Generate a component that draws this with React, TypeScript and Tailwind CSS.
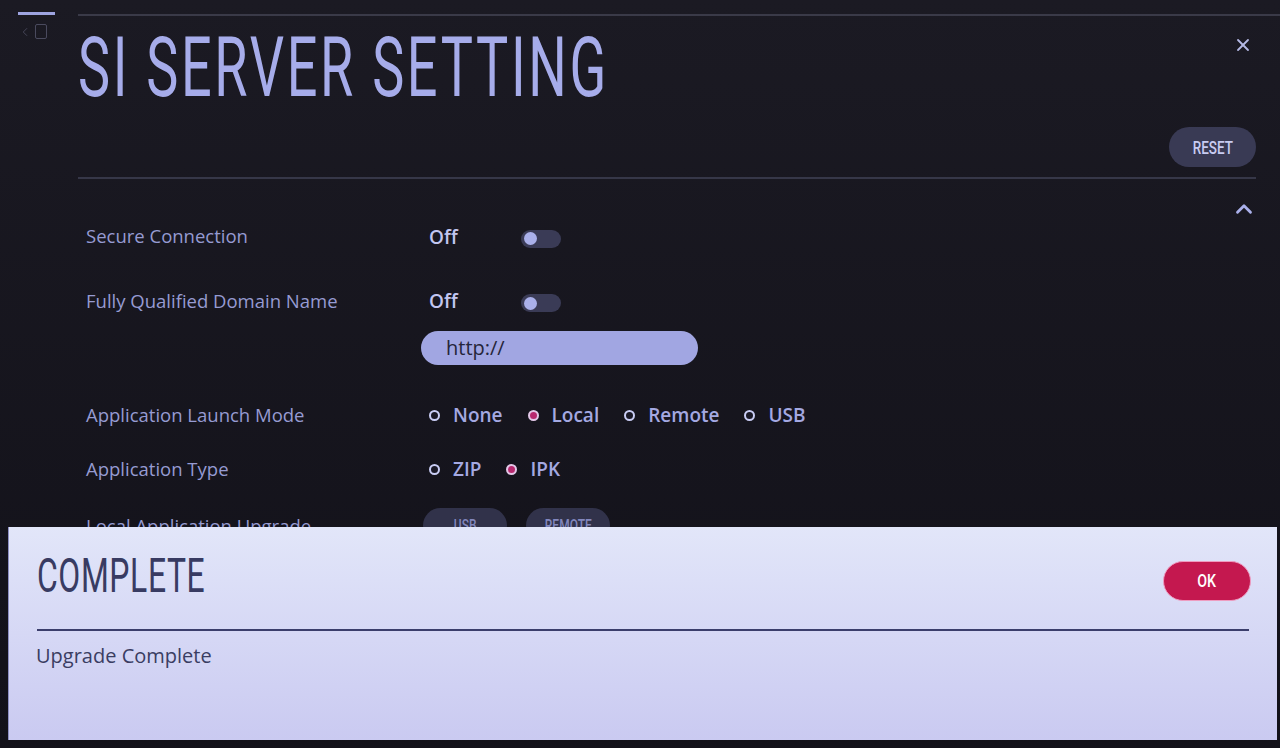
import { X, ChevronUp, ChevronLeft } from "lucide-react";

const label = "text-[18.5px] text-[#969bd2]";
const sans = { fontFamily: "'Open Sans', 'DejaVu Sans', sans-serif" };
const cond = { fontFamily: "Roboto, 'DejaVu Sans', sans-serif" };

function Toggle() {
  return (
    <div className="flex h-[18px] w-[40px] items-center rounded-full bg-[#3a3b56] px-[3px]">
      <div className="h-[13px] w-[13px] rounded-full bg-[#aab0ea]" />
    </div>
  );
}

function Radio({ text, on }: { text: string; on?: boolean }) {
  return (
    <div className="flex items-center gap-[13px]">
      <div
        className={
          on
            ? "h-[11px] w-[11px] rounded-full border-2 border-[#e3c8e8] bg-[#b8296f]"
            : "h-[11px] w-[11px] rounded-full border-2 border-[#c9cdf4] bg-[#1a1926]"
        }
      />
      <span className="text-[19px] font-semibold text-[#a4a9e2]" style={sans}>
        {text}
      </span>
    </div>
  );
}

function Pill({ text }: { text: string }) {
  return (
    <div className="flex h-[35px] w-[84px] items-center justify-center rounded-full bg-[#31324a]">
      <span className="inline-block scale-x-[0.75] text-[16px] font-medium text-[#8287bd]" style={cond}>
        {text}
      </span>
    </div>
  );
}

export default function App() {
  return (
    <div className="relative h-[748px] w-[1280px] overflow-hidden bg-gradient-to-b from-[#1b1a23] to-[#121119]" style={sans}>
      {/* top strip */}
      <div className="flex items-start pl-[18px] pt-[12px]">
        <div className="flex flex-col gap-[9px]">
          <div className="h-[3px] w-[37px] bg-[#9ea4e0]" />
          <div className="flex items-center gap-[3px] text-[#4a4a5e]">
            <ChevronLeft size={14} strokeWidth={1.5} />
            <div className="h-[15px] w-[12px] rounded-[2px] border border-[#4a4a5e]" />
          </div>
        </div>
        <div className="ml-[23px] mt-[2px] h-[2px] flex-1 bg-[#3a3a48]" />
      </div>

      <div className="flex flex-col pl-[78px] pr-[24px]">
        {/* header */}
        <div className="-mt-[13px] flex items-start justify-between">
          <h1
            className="inline-block origin-left scale-x-[0.65] whitespace-nowrap text-[83px] leading-none font-normal tracking-[0.05em] text-[#a6acea]"
            style={cond}
          >
            SI SERVER SETTING
          </h1>
          <X size={20} strokeWidth={2.2} className="mr-[3px] mt-[9px] text-[#b4b8e4]" />
        </div>
        <div className="mt-[18px] flex justify-end">
          <div className="flex h-[40px] w-[87px] items-center justify-center rounded-full bg-[#393a54]">
            <span className="inline-block scale-x-[0.75] text-[18px] font-medium text-[#c8ccf2]" style={cond}>
              RESET
            </span>
          </div>
        </div>
        <div className="mt-[10px] h-[2px] bg-[#363748]" />
        <div className="mt-[17px] flex justify-end">
          <ChevronUp size={26} strokeWidth={2.6} className="-mr-[1px] text-[#aab0ea]" />
        </div>

        {/* rows */}
        <div className="mt-[-1px] flex flex-col pl-[8px]">
          <div className="flex h-[30px] items-center">
            <div className={`w-[343px] ${label}`}>Secure Connection</div>
            <span className="mt-[3px] w-[92px] text-[19px] font-semibold text-[#c2c6f0]">Off</span>
            <div className="mt-[5px]">
              <Toggle />
            </div>
          </div>

          <div className="mt-[35px] flex h-[30px] items-center">
            <div className={`w-[343px] ${label}`}>Fully Qualified Domain Name</div>
            <span className="w-[92px] text-[19px] font-semibold text-[#c2c6f0]">Off</span>
            <div className="mt-[4px]">
              <Toggle />
            </div>
          </div>

          <div className="mt-[15px] flex">
            <div className="w-[335px]" />
            <div className="flex h-[34px] w-[277px] items-center rounded-full bg-[#a1a6e2] pl-[25px] text-[20px] text-[#25253a]">
              http://
            </div>
          </div>

          <div className="mt-[35px] flex h-[30px] items-center">
            <div className={`w-[343px] ${label}`}>Application Launch Mode</div>
            <div className="flex items-center gap-[25px]">
              <Radio text="None" />
              <Radio text="Local" on />
              <Radio text="Remote" />
              <Radio text="USB" />
            </div>
          </div>

          <div className="mt-[24px] flex h-[30px] items-center">
            <div className={`w-[343px] ${label}`}>Application Type</div>
            <div className="flex items-center gap-[25px]">
              <Radio text="ZIP" />
              <Radio text="IPK" on />
            </div>
          </div>

          <div className="mt-[24px] flex h-[35px] items-center">
            <div className={`w-[337px] ${label}`}>Local Application Upgrade</div>
            <div className="flex items-center gap-[19px]">
              <Pill text="USB" />
              <Pill text="REMOTE" />
            </div>
          </div>
        </div>
      </div>

      {/* popup */}
      <div className="absolute left-[8px] top-[527px] flex h-[213px] w-[1269px] flex-col border-l border-[#8d8fc4] bg-gradient-to-b from-[#e2e6f9] to-[#cacaf1] px-[28px] pt-[24px]">
        <div className="flex items-start justify-between">
          <h2
            className="inline-block origin-left scale-x-[0.65] whitespace-nowrap text-[49px] leading-none font-normal tracking-[0.02em] text-[#383b62]"
            style={cond}
          >
            COMPLETE
          </h2>
          <div className="-mr-[2px] mt-[10px] flex h-[40px] w-[88px] items-center justify-center rounded-full border-[1.5px] border-[#ee9cc0] bg-[#c4184f]">
            <span className="inline-block scale-x-[0.75] text-[19px] font-medium text-white" style={cond}>
              OK
            </span>
          </div>
        </div>
        <div className="mt-[28px] h-[2px] bg-[#3b3e6c]" />
        <div className="mt-[11px] -ml-[1px] text-[20px] leading-[28px] text-[#3a3d62]">Upgrade Complete</div>
      </div>
    </div>
  );
}
